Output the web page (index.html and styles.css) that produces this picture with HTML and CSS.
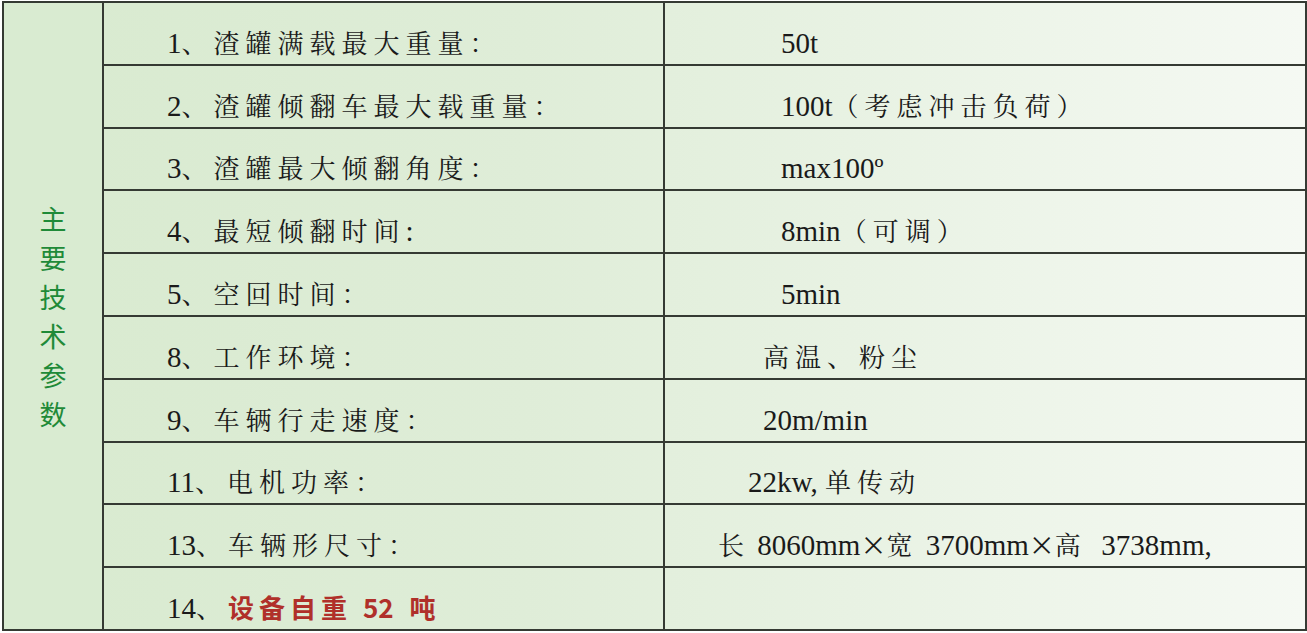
FILE: index.html
```html
<!DOCTYPE html>
<html lang="zh-CN">
<head>
<meta charset="utf-8">
<title>主要技术参数</title>
<link rel="stylesheet" href="styles.css">
</head>
<body>
<table class="spec">
  <colgroup>
    <col class="c-side">
    <col class="c-label">
    <col class="c-value">
  </colgroup>
  <tbody>
    <tr>
      <td class="side" rowspan="10"><span class="side-text">主<br>要<br>技<br>术<br>参<br>数</span></td>
      <td class="label"><span class="n">1</span>、渣罐满载最大重量：</td>
      <td class="value v1"><span class="n">50t</span></td>
    </tr>
    <tr>
      <td class="label"><span class="n">2</span>、渣罐倾翻车最大载重量：</td>
      <td class="value v1"><span class="n">100t</span>（考虑冲击负荷）</td>
    </tr>
    <tr>
      <td class="label"><span class="n">3</span>、渣罐最大倾翻角度：</td>
      <td class="value v1"><span class="n">max100º</span></td>
    </tr>
    <tr>
      <td class="label"><span class="n">4</span>、最短倾翻时间<span class="n">:</span></td>
      <td class="value v1"><span class="n">8min</span>（可调）</td>
    </tr>
    <tr>
      <td class="label"><span class="n">5</span>、空回时间：</td>
      <td class="value v1"><span class="n">5min</span></td>
    </tr>
    <tr>
      <td class="label"><span class="n">8</span>、工作环境：</td>
      <td class="value v2">高温、粉尘</td>
    </tr>
    <tr>
      <td class="label"><span class="n">9</span>、车辆行走速度：</td>
      <td class="value v2"><span class="n">20m/min</span></td>
    </tr>
    <tr>
      <td class="label"><span class="n">11</span>、电机功率：</td>
      <td class="value v3"><span class="n">22kw, </span>单传动</td>
    </tr>
    <tr>
      <td class="label"><span class="n">13</span>、车辆形尺寸：</td>
      <td class="value v4">长<span class="n"> 8060mm</span><span class="x">×</span>宽<span class="n"> 3700mm</span><span class="x">×</span>高<span class="n">  3738mm,</span></td>
    </tr>
    <tr>
      <td class="label"><span class="n">14</span>、<span class="warn">设备自重 <span class="warn-num">52</span> 吨</span></td>
      <td class="value"></td>
    </tr>
  </tbody>
</table>
</body>
</html>
```

FILE: styles.css
```css
html, body {
  margin: 0;
  padding: 0;
  background: #ffffff;
  overflow: hidden;
}

.spec {
  margin: 1px 0 0 2px;
  width: 1303px;
  height: 630px;
  border-collapse: collapse;
  table-layout: fixed;
  background: linear-gradient(90deg, #d8eacf 0%, #dfedd8 40%, #e8f2e3 65%, #f5f9f3 100%);
  font-family: "Liberation Serif", "Noto Serif CJK SC", "Noto Sans CJK SC", serif;
  color: #1a1a1a;
}

.c-side { width: 100px; }
.c-label { width: 561px; }
.c-value { width: 642px; }

.spec td {
  border: 2px solid #353a33;
  height: 56.8px;
  padding: 0 0 4px 0;
  vertical-align: bottom;
  font-size: 26px;
  line-height: 30px;
  letter-spacing: 6px;
  white-space: pre;
}

.spec td.side {
  vertical-align: middle;
  text-align: center;
  padding: 0;
  background: #d9ebd1;
}

.side-text {
  display: inline-block;
  font-family: "Noto Sans CJK SC", sans-serif;
  font-size: 27px;
  font-weight: 400;
  line-height: 39px;
  letter-spacing: 0;
  color: #1f8a38;
}

.label {
  padding-left: 63px !important;
}

.n {
  font-size: 29px;
  letter-spacing: 0;
}

.x {
  font-family: "Noto Sans CJK SC", sans-serif;
  font-size: 26px;
  letter-spacing: 0;
}

.warn {
  font-family: "Noto Sans CJK SC", sans-serif;
  font-weight: 700;
  font-size: 26px;
  color: #b0302a;
  letter-spacing: 5px;
}

.warn-num {
  letter-spacing: 0;
  margin-right: 5px;
}

.v1 { padding-left: 116px !important; }
.v2 { padding-left: 98px !important; }
.v3 { padding-left: 83px !important; }
.v4 { padding-left: 53px !important; }
```
